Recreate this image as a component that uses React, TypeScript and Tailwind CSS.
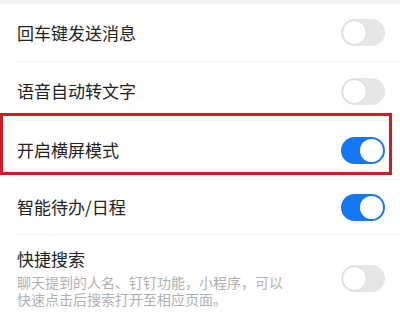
import React from 'react';

type Item = {
  title: string;
  on: boolean;
  h: string;
};

const items: Item[] = [
  { title: '回车键发送消息', on: false, h: 'h-[57px]' },
  { title: '语音自动转文字', on: false, h: 'h-[58px]' },
  { title: '开启横屏模式', on: true, h: 'h-[58px]' },
  { title: '智能待办/日程', on: true, h: 'h-[54px]' },
];

function Toggle({ on }: { on: boolean }) {
  return (
    <div
      className={
        on
          ? 'w-[44px] h-[27px] rounded-full bg-[#1677f5] flex items-center justify-end pr-[2px]'
          : 'w-[44px] h-[27px] rounded-full bg-[#e6e6e6] flex items-center justify-start pl-[1px]'
      }
    >
      <div
        className={
          on
            ? 'w-[23px] h-[23px] rounded-full bg-white'
            : 'w-[25px] h-[25px] rounded-full bg-white border border-[#d9d9d9]'
        }
      />
    </div>
  );
}

export default function App() {
  return (
    <div
      className="relative w-[400px] h-[320px] bg-white overflow-hidden"
      style={{ fontFamily: '"Noto Sans CJK SC", "Noto Sans", sans-serif' }}
    >
      <div className="h-[4px] bg-[#f3f3f7]" />
      {items.map((it, i) => (
        <div key={i}>
          <div className={`${it.h} flex items-center justify-between pl-[17px] pr-[15px]`}>
            <span className="text-[17px] text-[#222]">{it.title}</span>
            <Toggle on={it.on} />
          </div>
          <div className="ml-[14px] h-px bg-[#f0f0f0]" />
        </div>
      ))}
      <div className="flex items-center justify-between pl-[17px] pr-[15px] pt-[13px] pb-[12px]">
        <div>
          <div className="text-[17px] leading-[22px] text-[#222]">快捷搜索</div>
          <div className="mt-[4px] text-[14px] leading-[17px] text-[#b0b0b0] w-[272px]">
            聊天提到的人名、钉钉功能，小程序，可以快速点击后搜索打开至相应页面。
          </div>
        </div>
        <Toggle on={false} />
      </div>
      <div className="ml-[14px] h-px bg-[#f0f0f0]" />

      <div className="absolute left-[0px] top-[113px] w-[392px] h-[62px] border-[3px] border-[#d21a22]" />
    </div>
  );
}
